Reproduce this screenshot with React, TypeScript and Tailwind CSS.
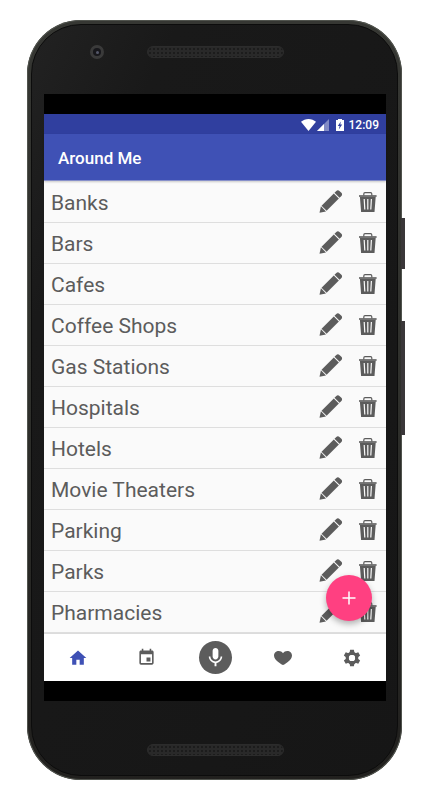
import { useState } from 'react'
import type { ReactNode } from 'react'
import { MdEvent, MdHome, MdMic } from 'react-icons/md'

const PLACES = [
  'Banks',
  'Bars',
  'Cafes',
  'Coffee Shops',
  'Gas Stations',
  'Hospitals',
  'Hotels',
  'Movie Theaters',
  'Parking',
  'Parks',
  'Pharmacies',
]

function PencilIcon() {
  return (
    <svg width="24" height="24" viewBox="0 0 24 24" fill="currentColor" aria-hidden="true">
      <g transform="translate(.5 22.800) rotate(-45)">
        <path d="M0 0L5.600-3.600v7.200z" />
        <path d="M6.500-3.600h17.300v7.200H6.500z" />
        <path d="M24.800-3.600h2.600c1.200 0 2.200.9 2.200 2.200v2.800c0 1.300-1 2.200-2.200 2.200h-2.600z" />
      </g>
    </svg>
  )
}

function TrashIcon() {
  return (
    <svg width="18" height="22" viewBox="0 0 18 22" fill="currentColor" aria-hidden="true">
      <path
        d="M4.800 4.500V2.900c0-.8.5-1.300 1.200-1.300h5.600c.7 0 1.200.5 1.200 1.300v1.600"
        fill="none"
        stroke="currentColor"
        strokeWidth="1.200"
      />
      <path d="M0 4.200h17.600v1.600H0z" />
      <path
        fillRule="evenodd"
        d="M.9 5.800h15.800l-1.200 15.200H2.100zM4.600 8l.6 10.500h1.200L5.800 8zM8.200 8v10.500h1.200V8zM11.800 8l-.6 10.500h1.200l.6-10.500z"
      />
    </svg>
  )
}

function HeartIcon() {
  return (
    <svg width="18" height="14" viewBox="0 0 18 14" fill="currentColor" aria-hidden="true">
      <path d="M9 2.200C10 .8 11.500 0 13.200 0 15.900 0 18 2 18 4.600c0 2.700-1.700 4.500-4.200 6.500L10.300 13.500c-.8.6-1.800.6-2.600 0L4.200 11.100C1.700 9.100 0 7.300 0 4.600 0 2 2.100 0 4.800 0 6.500 0 8 .8 9 2.200z" />
    </svg>
  )
}

function GearIcon() {
  return (
    <svg width="18" height="18" viewBox="-9 -9 18 18" fill="currentColor" aria-hidden="true">
      <circle r="4.700" fill="none" stroke="currentColor" strokeWidth="3.200" />
      {[0, 60, 120, 180, 240, 300].map((angle) => (
        <path key={angle} d="M-1.900-8.300h3.800l.8 4.300h-5.400z" transform={`rotate(${angle})`} />
      ))}
      <circle r="3.100" fill="#fff" />
    </svg>
  )
}

function PlusIcon() {
  return (
    <svg width="14" height="14" viewBox="0 0 14 14" stroke="currentColor" strokeWidth="1.500" aria-hidden="true">
      <path d="M7 .5v13M.5 7h13" />
    </svg>
  )
}

function StatusIcons() {
  return (
    <svg width="43" height="14" viewBox="0 0 43 14" fill="#fff" aria-hidden="true">
      <path d="M0 3.800C4-.1 11-.1 15 3.800L7.500 13z" />
      <path d="M16 13L28 1v12z" fillOpacity=".4" />
      <path d="M16 13l7-7v7z" />
      <path
        fillRule="evenodd"
        d="M35 2h2V1h4v1h2v11h-8zM39.800 3.500L36.800 8h1.800l-.8 3.500 3.400-4.900h-1.900z"
      />
    </svg>
  )
}

function Grille() {
  return (
    <div className="h-3 w-[137px] rounded-full border border-[#2c2c2c] bg-[#292929] bg-[radial-gradient(#1c1c1c_1px,transparent_1px)] bg-size-[4px_4px]" />
  )
}

interface TabButtonProps {
  label: string
  active: boolean
  onClick: () => void
  children: ReactNode
}

function TabButton({ label, active, onClick, children }: TabButtonProps) {
  return (
    <button
      type="button"
      aria-label={label}
      aria-pressed={active}
      onClick={onClick}
      className={`flex h-full flex-1 items-center justify-center ${active ? 'text-[#3f51b5]' : 'text-[#5c5c5c]'}`}
    >
      {children}
    </button>
  )
}

export default function App() {
  const [places, setPlaces] = useState(PLACES)
  const [tab, setTab] = useState('home')

  function removePlace(name: string) {
    setPlaces(places.filter((p) => p !== name))
  }

  return (
    <div className="min-h-screen bg-white pt-5 pr-7 pb-5 pl-[27px] font-[Roboto,sans-serif]">
      <div className="relative rounded-[54px] bg-gradient-to-b from-[#363733] via-[#2f302c] to-[#21201e] p-1 shadow-[inset_0_0_0_1px_#50534d]">
        <div className="absolute top-[198px] -right-[3px] h-[51px] w-1 bg-[#3a3739]" />
        <div className="absolute top-[301px] -right-[3px] h-[114px] w-1 bg-[#3a3739]" />

        <div className="rounded-[50px] border border-[#0c0c0c] bg-gradient-to-br from-[#222] via-[#191919] via-20% to-[#161616] pr-[11px] pl-3">
          <div className="relative flex h-[69px] items-start justify-center pt-[21px]">
            <div className="absolute top-5 left-[46px] flex size-[14px] items-center justify-center rounded-full bg-[#3a3a3a]">
              <div className="flex size-2 items-center justify-center rounded-full bg-[#17171b]">
                <div className="size-[3px] rounded-full bg-[#55586a]" />
              </div>
            </div>
            <Grille />
          </div>

          <div className="bg-black py-5">
            <div className="flex h-5 items-center justify-end gap-[5px] bg-[#303f9f] pt-px pr-[7px] text-xs font-medium text-white">
              <StatusIcons />
              <span>12:09</span>
            </div>

            <header className="relative z-10 flex h-[47px] items-center border-b border-[#8790ca] bg-[#3f51b5] px-[14px] pt-1 shadow-[0_1px_2px_rgba(0,0,0,0.2)]">
              <h1 className="text-[17px] font-medium text-white">Around Me</h1>
            </header>

            <div className="relative bg-[#fafafa] pt-px">
              <ul>
                {places.map((name) => (
                  <li
                    key={name}
                    className="flex h-[41px] items-center border-b border-[#dedede] pr-[9px] pl-[7px] text-[#5c5c5c]"
                  >
                    <span className="flex-1 pt-px text-[21px] leading-7">{name}</span>
                    <button type="button" aria-label={`Edit ${name}`} className="mr-4">
                      <PencilIcon />
                    </button>
                    <button type="button" aria-label={`Delete ${name}`} onClick={() => removePlace(name)}>
                      <TrashIcon />
                    </button>
                  </li>
                ))}
              </ul>
              <button
                type="button"
                aria-label="Add place"
                className="absolute right-[14px] bottom-3 flex size-[46px] items-center justify-center rounded-full bg-[#ff4081] text-white shadow-[0_3px_6px_rgba(0,0,0,0.3)]"
              >
                <PlusIcon />
              </button>
            </div>

            <nav className="flex h-12 items-center border-t border-[#dcdcdc] bg-white">
              <TabButton label="Home" active={tab === 'home'} onClick={() => setTab('home')}>
                <MdHome size={20} />
              </TabButton>
              <TabButton label="Events" active={tab === 'events'} onClick={() => setTab('events')}>
                <MdEvent size={19} />
              </TabButton>
              <TabButton label="Voice search" active={tab === 'voice'} onClick={() => setTab('voice')}>
                <span className="flex size-[33px] items-center justify-center rounded-full bg-[#5c5c5c] text-white">
                  <MdMic size={23} />
                </span>
              </TabButton>
              <TabButton label="Favorites" active={tab === 'favorites'} onClick={() => setTab('favorites')}>
                <HeartIcon />
              </TabButton>
              <TabButton label="Settings" active={tab === 'settings'} onClick={() => setTab('settings')}>
                <GearIcon />
              </TabButton>
            </nav>
          </div>

          <div className="flex h-[74px] items-start justify-center pt-[43px]">
            <Grille />
          </div>
        </div>
      </div>
    </div>
  )
}
